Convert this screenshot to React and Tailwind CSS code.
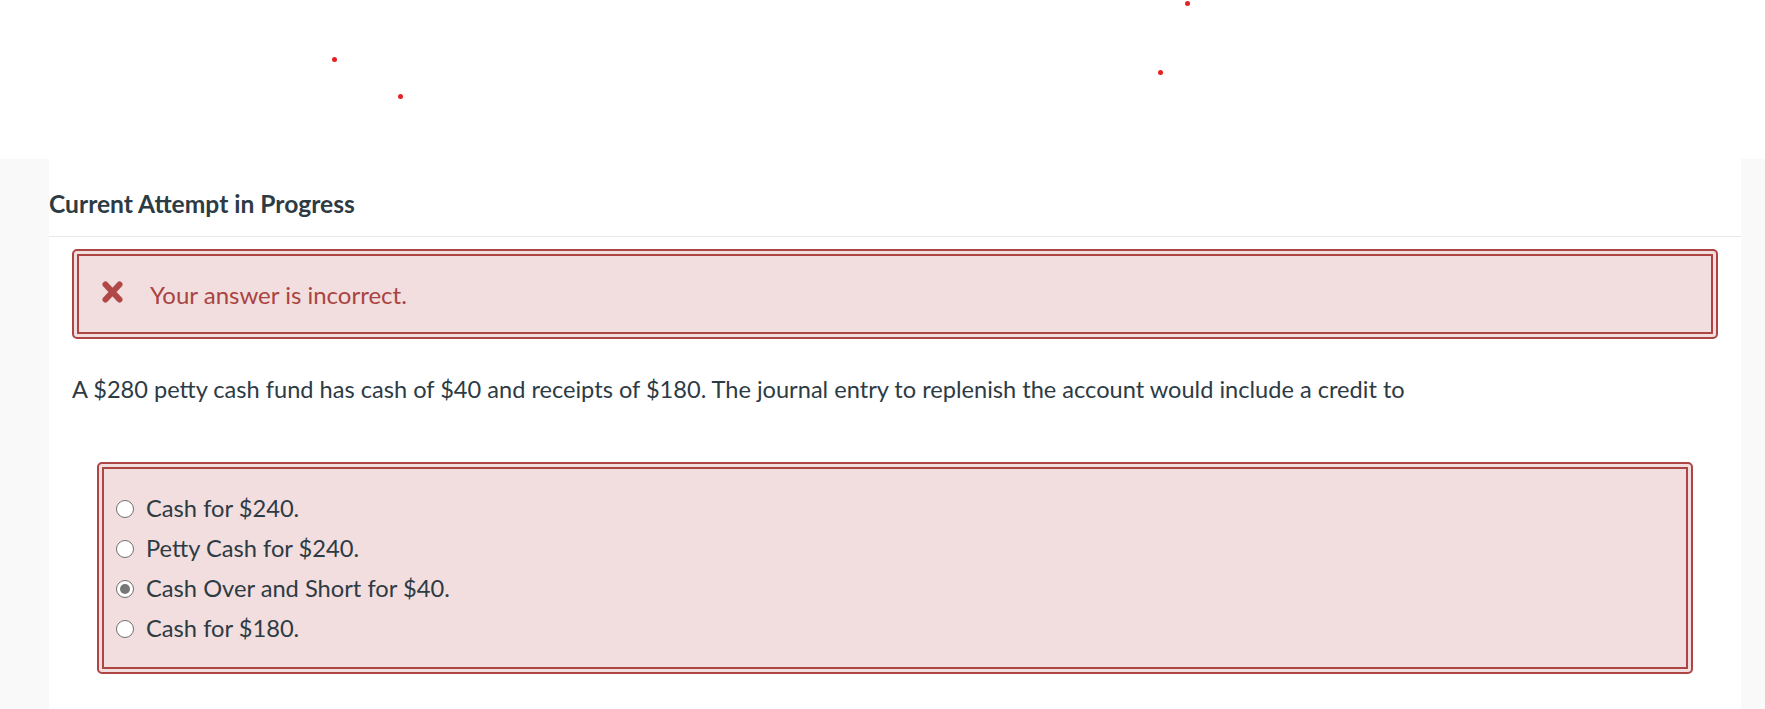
const OPTIONS = [
  { label: "Cash for $240.", checked: false },
  { label: "Petty Cash for $240.", checked: false },
  { label: "Cash Over and Short for $40.", checked: true },
  { label: "Cash for $180.", checked: false },
];

// stray red dots in the top margin
const DOTS = [
  { x: 332, y: 57 },
  { x: 398, y: 94 },
  { x: 1158, y: 70 },
  { x: 1185, y: 1 },
];

function Radio({ checked }) {
  return (
    <span className="flex h-[18px] w-[18px] shrink-0 items-center justify-center rounded-full border-[1.5px] border-[#707070] bg-white">
      {checked && <span className="h-[10px] w-[10px] rounded-full bg-[#777]" />}
    </span>
  );
}

function CrossIcon() {
  return (
    <svg width="23" height="24" viewBox="0 0 23 24" aria-hidden="true" className="-mt-[6px] shrink-0">
      <path d="M4.5 4.5 L18.5 19.5 M18.5 4.5 L4.5 19.5" stroke="#b04848" strokeWidth="6" strokeLinecap="round" />
    </svg>
  );
}

export default function App() {
  return (
    <div className="min-h-[709px] bg-white font-['Lato','Noto_Sans',sans-serif] text-[24px] leading-[1.2] text-[#2d3b45]">
      <div className="relative h-[159px]">
        {DOTS.map((d, i) => (
          <span
            key={i}
            className="absolute h-[5px] w-[5px] rounded-full bg-[#e52222]"
            style={{ left: d.x, top: d.y }}
          />
        ))}
      </div>

      <div className="bg-[#f9f9f9] pl-[49px] pr-[24px]">
        <div className="min-h-[550px] bg-white pb-8">
          <div className="border-b border-[#e8e8e8] pt-[30px] pb-[17px]">
            <h2 className="text-[24.6px] font-bold">Current Attempt in Progress</h2>
          </div>

          <div className="mx-[23px] mt-[12px] flex items-center rounded-[5px] border-[7px] border-double border-[#ad4545] bg-[#f2dede] pt-[25px] pb-[23px] pl-[22px] text-[#a94442]">
            <CrossIcon />
            <p className="ml-[26px]">Your answer is incorrect.</p>
          </div>

          <p className="mt-[36px] pl-[23px] text-[23.6px]">
            A $280 petty cash fund has cash of $40 and receipts of $180. The journal entry to replenish the account would include a credit to
          </p>

          <div className="mx-[48px] mt-[58px] rounded-[5px] border-[7px] border-double border-[#ad4545] bg-[#f2dede] pt-[20px] pb-[18px] pl-[12px] text-[23.7px]">
            {OPTIONS.map((o) => (
              <label key={o.label} className="flex h-[40px] items-center gap-[12px]">
                <Radio checked={o.checked} />
                <span>{o.label}</span>
              </label>
            ))}
          </div>
        </div>
      </div>
    </div>
  );
}
